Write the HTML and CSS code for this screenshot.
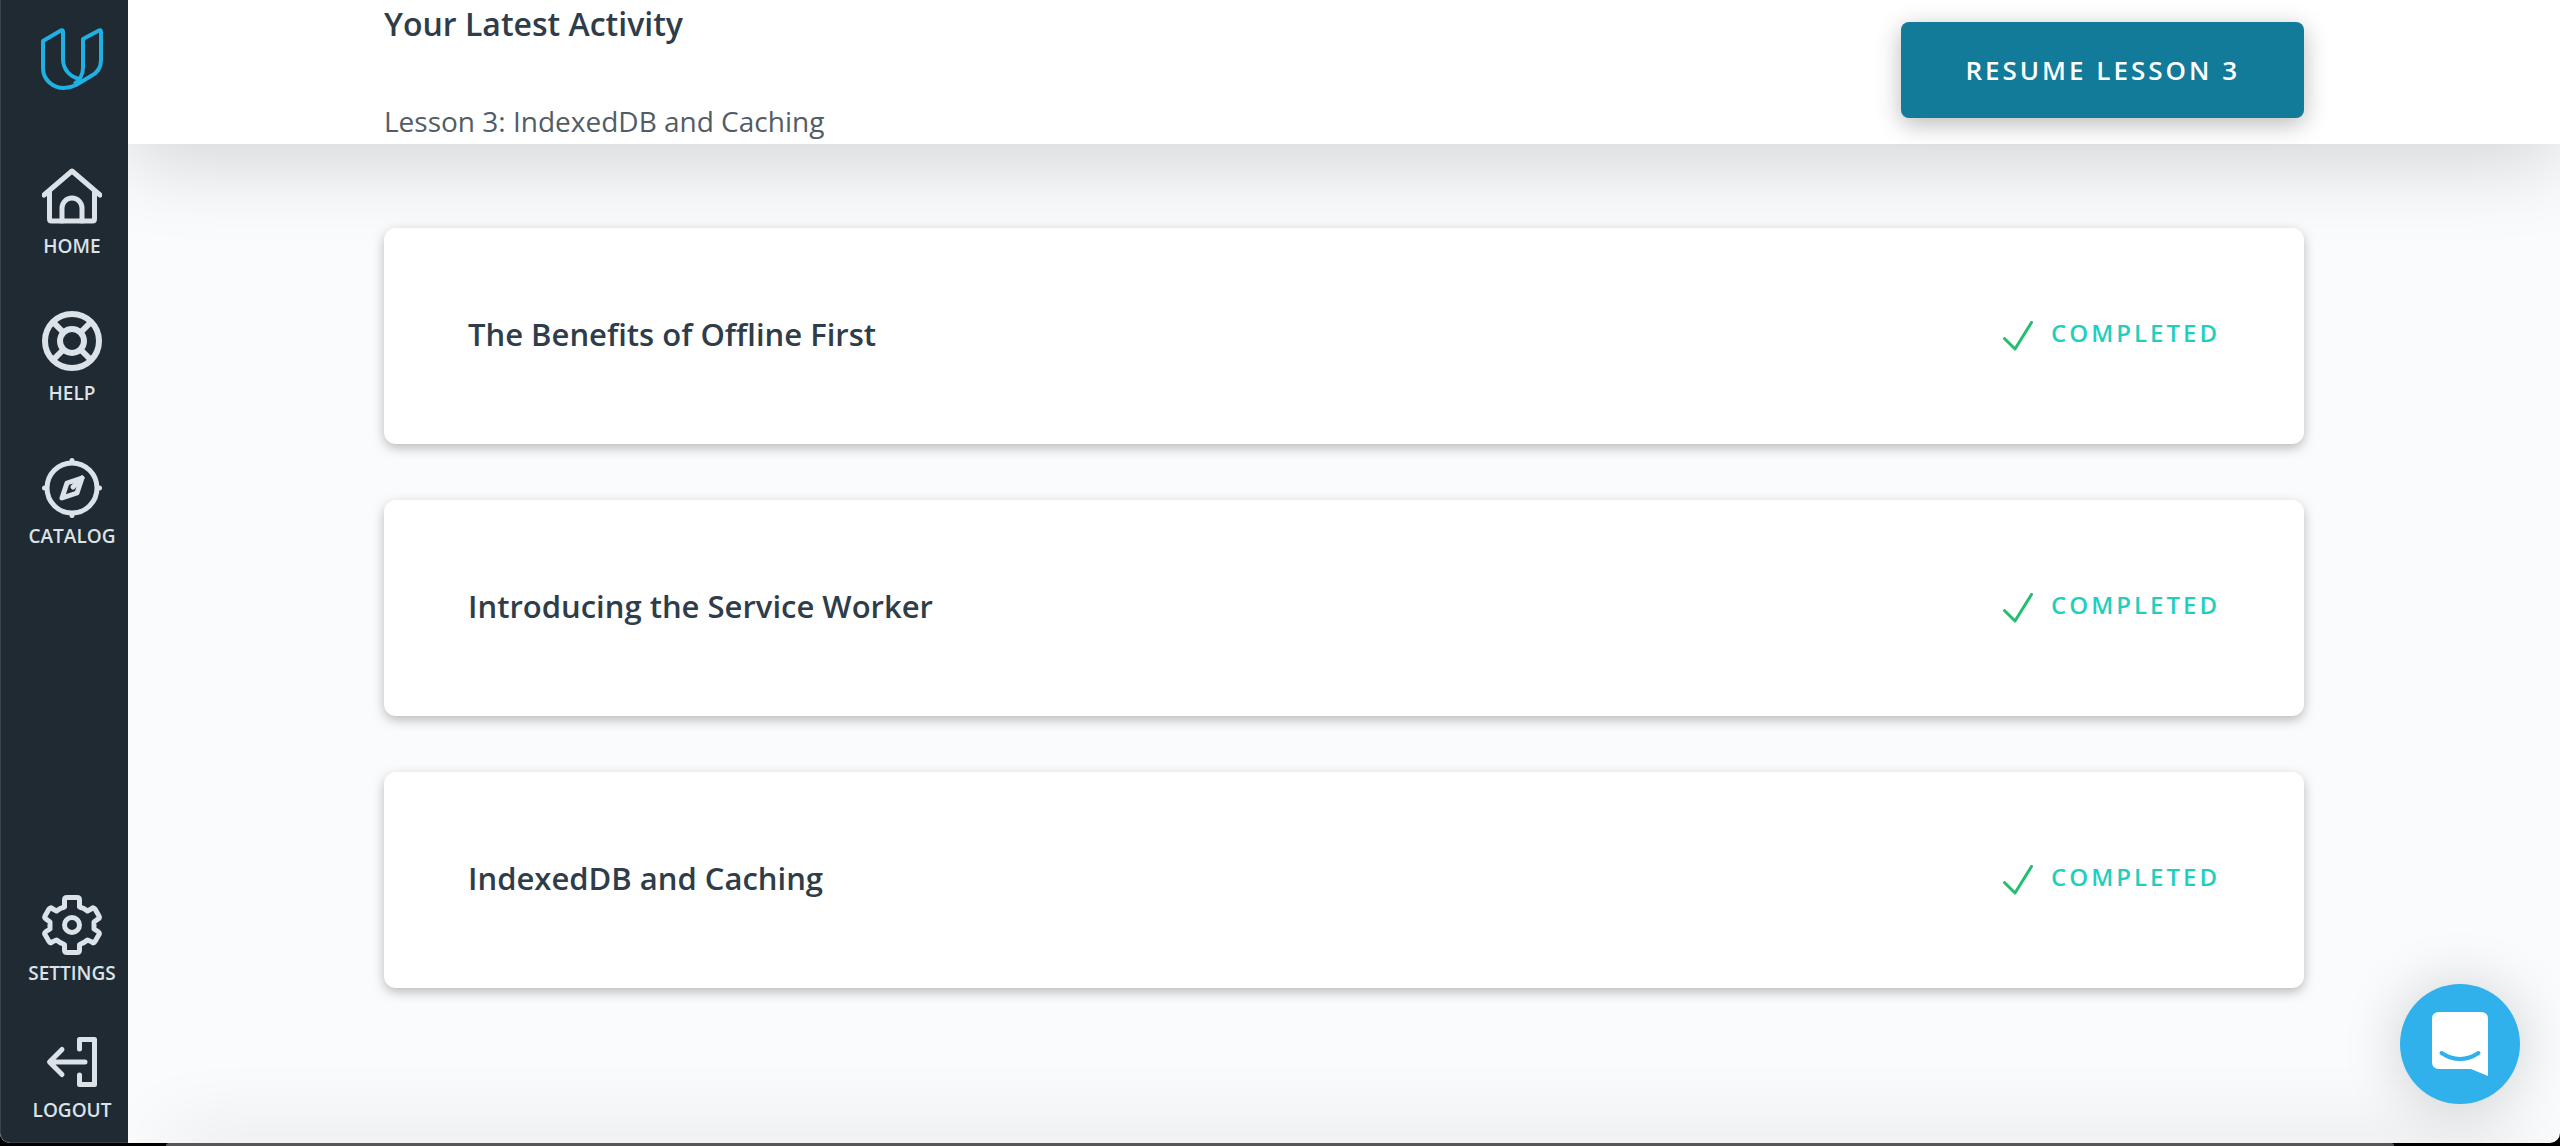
FILE: index.html
```html
<!DOCTYPE html>
<html lang="en">
<head>
<meta charset="utf-8">
<title>Your Latest Activity</title>
<link rel="stylesheet" href="styles.css">
</head>
<body>
<div class="app">
  <nav class="sidebar" aria-label="Main">
    <a class="logo" href="#" aria-label="Udacity">
      <svg viewBox="0 0 62 62" width="62" height="62" fill="none" stroke="#1fb1e3" stroke-width="4" stroke-linejoin="round"><path d="M22 4Q22 1 19 3L2 13V40C2 52 12 60 23 60C27 60 31 59 35 57L50 48C56 45 60 39 60 32V4Q60 1 57 3L42 11V40C42 47 38 53 33 56"/><path d="M22 3V31C22 42 30 50 40 51"/></svg>
    </a>
    <ul class="nav-list">
      <li><a class="nav-link" href="#">
        <svg viewBox="0 0 60 60" width="60" height="60" fill="none" stroke="#dbe2e8" stroke-width="5" stroke-linecap="round" stroke-linejoin="round"><path d="M2 27L30 3L58 27"/><path d="M7.500 25V51Q7.500 53 9.500 53H50.500Q52.500 53 52.500 51V25"/><path d="M20 53V40A10 10 0 0 1 40 40V53"/></svg>
        <span>HOME</span></a></li>
      <li><a class="nav-link nav-link-help" href="#">
        <svg viewBox="0 0 60 60" width="60" height="60" fill="none" stroke="#dbe2e8" stroke-width="6"><circle cx="30" cy="30" r="27"/><circle cx="30" cy="30" r="12"/><path d="M11 11L21.500 21.500M49 11L38.500 21.500M11 49L21.500 38.500M49 49L38.500 38.500"/></svg>
        <span>HELP</span></a></li>
      <li><a class="nav-link" href="#">
        <svg viewBox="0 0 60 60" width="60" height="60" fill="none" stroke="#dbe2e8" stroke-width="5" stroke-linecap="round" stroke-linejoin="round"><circle cx="30" cy="30" r="25"/><path d="M30 2.500V4M30 56V57.500M2.500 30H4M56 30H57.500"/><path d="M40 20L25 25L20 40L35 35Z"/><path d="M40 20L31 29"/></svg>
        <span>CATALOG</span></a></li>
    </ul>
    <ul class="nav-list nav-list-bottom">
      <li><a class="nav-link" href="#">
        <svg viewBox="0 0 60 60" width="60" height="60" fill="none" stroke="#dbe2e8" stroke-width="5" stroke-linejoin="round"><path d="M22.500 12V5Q22.500 2.500 25 2.500H35Q37.500 2.500 37.500 5V12Q42 13 45.500 16L50 13.500Q51.500 12 53 14L57 21Q58 23 56 24L52 27V34L56 36.500Q58 38 57 39.500L53 46.500Q51.500 49 50 47L45.500 45Q42 48 37.500 49.500V55Q37.500 57.500 35 57.500H25Q22.500 57.500 22.500 55V49.500Q18 48 14.500 45L10 47Q8.500 49 7 46.500L3 39.500Q2 38 4 36.500L8 34V27L4 24Q2 23 3 21L7 14Q8.500 12 10 13.500L14.500 16Q18 13 22.500 12Z"/><circle cx="30" cy="30" r="7.500"/></svg>
        <span>SETTINGS</span></a></li>
      <li><a class="nav-link" href="#">
        <svg viewBox="0 0 60 60" width="60" height="60" fill="none" stroke="#dbe2e8" stroke-width="5" stroke-linecap="round" stroke-linejoin="round"><path d="M37.500 17V7.500H52.500V52.500H37.500V43"/><path d="M43 30H8M20 17.500L7.500 30L20 42.500"/></svg>
        <span>LOGOUT</span></a></li>
    </ul>
  </nav>
  <main class="main">
    <header class="activity">
      <div class="wrap activity-row">
        <div>
          <h1 class="title">Your Latest Activity</h1>
          <p class="subtitle">Lesson 3: IndexedDB and Caching</p>
        </div>
        <button class="resume" type="button">RESUME LESSON 3</button>
      </div>
    </header>
    <section class="wrap lessons" aria-label="Lessons">
      <article class="card"><h2 class="card-title">The Benefits of Offline First</h2>
        <div class="status"><svg viewBox="0 0 30 30" width="30" height="30" fill="none" stroke="#23bf6b" stroke-width="3" stroke-linecap="round" stroke-linejoin="round"><path d="M1.500 17.500L12 28L28.500 1.500"/></svg><span>COMPLETED</span></div></article>
      <article class="card"><h2 class="card-title">Introducing the Service Worker</h2>
        <div class="status"><svg viewBox="0 0 30 30" width="30" height="30" fill="none" stroke="#23bf6b" stroke-width="3" stroke-linecap="round" stroke-linejoin="round"><path d="M1.500 17.500L12 28L28.500 1.500"/></svg><span>COMPLETED</span></div></article>
      <article class="card"><h2 class="card-title">IndexedDB and Caching</h2>
        <div class="status"><svg viewBox="0 0 30 30" width="30" height="30" fill="none" stroke="#23bf6b" stroke-width="3" stroke-linecap="round" stroke-linejoin="round"><path d="M1.500 17.500L12 28L28.500 1.500"/></svg><span>COMPLETED</span></div></article>
    </section>
    <div class="footer-edge"></div>
  </main>
  <button class="chat" type="button" aria-label="Open chat">
    <svg viewBox="0 0 56 64" width="56" height="64"><path fill="#fff" d="M7 0H49Q56 0 56 7V64L39 57H7Q0 57 0 50V7Q0 0 7 0Z"/><path d="M9.500 41Q28 53 46.500 41" fill="none" stroke="#30b1ec" stroke-width="4" stroke-linecap="round"/></svg>
  </button>
</div>
<div class="dock-edge"></div>
</body>
</html>
```
FILE: styles.css
```css
* { box-sizing: border-box; }

body {
  display: flex;
  flex-direction: column;
  height: 100vh;
  margin: 0;
  background: #000;
  font-family: "Open Sans", "Noto Sans", sans-serif;
  color: #2e3d49;
}

h1, h2, p, ul { margin: 0; padding: 0; }
ul { list-style: none; }
svg { display: block; flex: none; }

.app {
  display: flex;
  flex: 1;
  min-height: 0;
  overflow: hidden;
  border-radius: 0 0 10px 10px;
  background: #fafbfd;
}

.dock-edge {
  flex: none;
  height: 3px;
  margin: 0 166px;
  border-radius: 3px 3px 0 0;
  background: #56565a;
}

.sidebar {
  display: flex;
  flex-direction: column;
  flex: none;
  width: 128px;
  padding: 28px 0 18px 15px;
  border-left: 1px solid #37434c;
  border-bottom: 1px solid #37434c;
  border-bottom-left-radius: 10px;
  background: #1f2a32;
}

.logo { align-self: center; }

.nav-list {
  display: flex;
  flex-direction: column;
  gap: 51px;
  margin-top: 78px;
}

.nav-list-bottom {
  gap: 45px;
  margin-top: auto;
}

.nav-link {
  display: flex;
  flex-direction: column;
  align-items: center;
  gap: 4px;
  color: #dbe2e8;
  font-size: 19px;
  font-weight: 600;
  line-height: 28px;
  text-decoration: none;
}

.nav-link-help { gap: 8px; }

.main {
  display: flex;
  flex-direction: column;
  flex: 1;
  min-width: 0;
  overflow: hidden;
}

.wrap {
  width: 100%;
  max-width: 1920px;
  margin: 0 auto;
}

.activity {
  flex: none;
  padding-bottom: 3px;
  background: #fff;
  box-shadow: 0 20px 80px rgba(0, 0, 0, 0.15);
}

.activity-row {
  display: flex;
  justify-content: space-between;
  align-items: flex-start;
}

.title {
  font-size: 32px;
  font-weight: 600;
  line-height: 48px;
}

.card-title {
  font-size: 31px;
  font-weight: 600;
  line-height: 44px;
}

.subtitle {
  margin-top: 53px;
  color: #525c65;
  font-size: 28px;
  line-height: 40px;
}

.resume {
  height: 96px;
  margin-top: 22px;
  padding: 0 64px;
  border: 0;
  border-radius: 8px;
  background: #117b99;
  box-shadow: 0 6px 24px rgba(0, 0, 0, 0.28);
  color: #fff;
  font: 600 26px/40px "Open Sans", "Noto Sans", sans-serif;
  letter-spacing: 3px;
}

.lessons {
  display: flex;
  flex-direction: column;
  gap: 56px;
  padding-top: 84px;
}

.card {
  display: flex;
  justify-content: space-between;
  align-items: flex-start;
  height: 216px;
  padding: 84px;
  border-radius: 12px;
  background: #fff;
  box-shadow: 0 4px 12px rgba(0, 0, 0, 0.26);
}

.status {
  display: flex;
  gap: 18px;
  color: #1fcfbd;
  font-size: 24px;
  font-weight: 600;
  line-height: 42px;
  letter-spacing: 3px;
}

.status svg { margin-top: 9px; }

.footer-edge {
  height: 20px;
  margin: auto 40px -20px;
  box-shadow: 0 0 80px rgba(0, 0, 0, 0.2);
}

.chat {
  position: fixed;
  right: 40px;
  bottom: 42px;
  display: flex;
  justify-content: center;
  align-items: center;
  width: 120px;
  height: 120px;
  padding: 0;
  border: 0;
  border-radius: 50%;
  background: #30b1ec;
  box-shadow: 0 2px 60px rgba(0, 0, 0, 0.18);
}
```
